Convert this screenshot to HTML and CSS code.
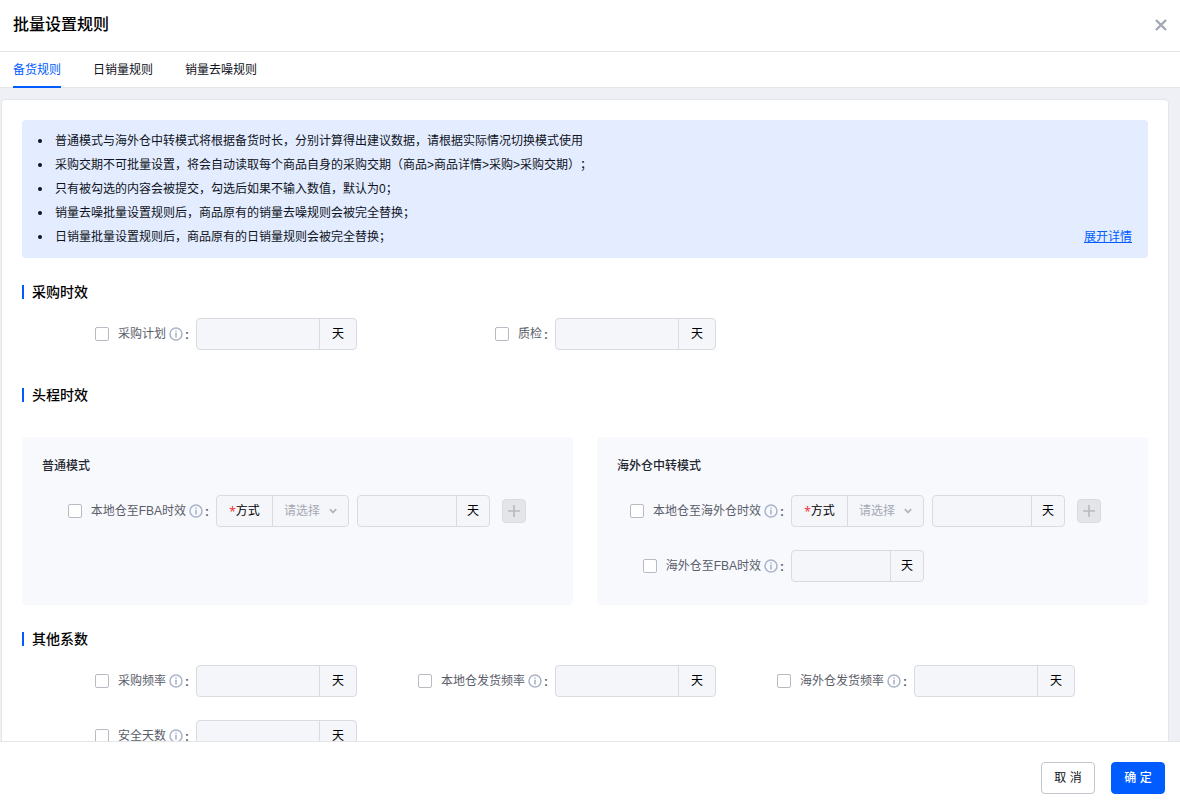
FILE: index.html
```html
<!DOCTYPE html>
<html lang="zh-CN">
<head>
<meta charset="utf-8">
<title>批量设置规则</title>
<link rel="stylesheet" href="styles.css">
</head>
<body>
<svg class="sprite" aria-hidden="true">
  <symbol id="info" viewBox="0 0 14 14">
    <circle cx="7" cy="7" r="6" fill="none" stroke="currentColor" stroke-width="1.5"/>
    <path d="M6.2 3.4h1.6v1.4H6.2zM6.2 5.8h1.6v4.8H6.2z" fill="currentColor"/>
  </symbol>
  <symbol id="plus" viewBox="0 0 12 12">
    <path d="M6 0v12M0 6h12" fill="none" stroke="currentColor" stroke-width="1.6"/>
  </symbol>
  <symbol id="chevron" viewBox="0 0 8 6">
    <path d="M.8 1.2 4 4.4l3.2-3.2" fill="none" stroke="currentColor" stroke-width="1.8"/>
  </symbol>
</svg>
<div class="dialog">
  <header class="dialog-header">
    <h1 class="dialog-title">批量设置规则</h1>
    <button class="close" type="button" aria-label="关闭">
      <svg width="12" height="12" viewBox="0 0 12 12"><path d="M1 1l10 10M11 1L1 11" fill="none" stroke="currentColor" stroke-width="2.4"/></svg>
    </button>
  </header>
  <nav class="tabs">
    <button class="tab active" type="button">备货规则</button>
    <button class="tab" type="button">日销量规则</button>
    <button class="tab" type="button">销量去噪规则</button>
  </nav>
  <main class="content">
    <div class="card">
      <div class="notice">
        <ul class="notice-list">
          <li>普通模式与海外仓中转模式将根据备货时长，分别计算得出建议数据，请根据实际情况切换模式使用</li>
          <li>采购交期不可批量设置，将会自动读取每个商品自身的采购交期（商品&gt;商品详情&gt;采购&gt;采购交期）；</li>
          <li>只有被勾选的内容会被提交，勾选后如果不输入数值，默认为0；</li>
          <li>销量去噪批量设置规则后，商品原有的销量去噪规则会被完全替换；</li>
          <li>日销量批量设置规则后，商品原有的日销量规则会被完全替换；</li>
        </ul>
        <a class="link" href="#">展开详情</a>
      </div>

      <section class="section">
        <h2 class="section-title">采购时效</h2>
        <div class="grid">
          <div class="field">
            <label class="label"><input class="check" type="checkbox"><span>采购计划</span><svg class="info"><use href="#info"/></svg><span class="colon">:</span></label>
            <div class="group wide"><input class="input" type="text" aria-label="采购计划" disabled><span class="unit">天</span></div>
          </div>
          <div class="field">
            <label class="label"><input class="check" type="checkbox"><span>质检</span><span class="colon">:</span></label>
            <div class="group wide"><input class="input" type="text" aria-label="质检" disabled><span class="unit">天</span></div>
          </div>
        </div>
      </section>

      <section class="section spaced">
        <h2 class="section-title">头程时效</h2>
        <div class="panels">
          <div class="panel">
            <h3 class="panel-title">普通模式</h3>
            <div class="field">
              <label class="label"><input class="check" type="checkbox"><span>本地仓至FBA时效</span><svg class="info"><use href="#info"/></svg><span class="colon">:</span></label>
              <div class="group"><span class="prefix"><i class="star">*</i>方式</span><span class="select-box"><select class="select" aria-label="方式" disabled><option>请选择</option></select><svg class="chevron"><use href="#chevron"/></svg></span></div>
              <div class="group"><input class="input" type="text" aria-label="本地仓至FBA时效" disabled><span class="unit">天</span></div>
              <button class="add" type="button" aria-label="添加" disabled><svg width="12" height="12"><use href="#plus"/></svg></button>
            </div>
          </div>
          <div class="panel">
            <h3 class="panel-title">海外仓中转模式</h3>
            <div class="field">
              <label class="label"><input class="check" type="checkbox"><span>本地仓至海外仓时效</span><svg class="info"><use href="#info"/></svg><span class="colon">:</span></label>
              <div class="group"><span class="prefix"><i class="star">*</i>方式</span><span class="select-box"><select class="select" aria-label="方式" disabled><option>请选择</option></select><svg class="chevron"><use href="#chevron"/></svg></span></div>
              <div class="group"><input class="input" type="text" aria-label="本地仓至海外仓时效" disabled><span class="unit">天</span></div>
              <button class="add" type="button" aria-label="添加" disabled><svg width="12" height="12"><use href="#plus"/></svg></button>
            </div>
            <div class="field">
              <label class="label"><input class="check" type="checkbox"><span>海外仓至FBA时效</span><svg class="info"><use href="#info"/></svg><span class="colon">:</span></label>
              <div class="group"><input class="input" type="text" aria-label="海外仓至FBA时效" disabled><span class="unit">天</span></div>
            </div>
          </div>
        </div>
      </section>

      <section class="section">
        <h2 class="section-title">其他系数</h2>
        <div class="grid">
          <div class="field">
            <label class="label"><input class="check" type="checkbox"><span>采购频率</span><svg class="info"><use href="#info"/></svg><span class="colon">:</span></label>
            <div class="group wide"><input class="input" type="text" aria-label="采购频率" disabled><span class="unit">天</span></div>
          </div>
          <div class="field">
            <label class="label"><input class="check" type="checkbox"><span>本地仓发货频率</span><svg class="info"><use href="#info"/></svg><span class="colon">:</span></label>
            <div class="group wide"><input class="input" type="text" aria-label="本地仓发货频率" disabled><span class="unit">天</span></div>
          </div>
          <div class="field">
            <label class="label"><input class="check" type="checkbox"><span>海外仓发货频率</span><svg class="info"><use href="#info"/></svg><span class="colon">:</span></label>
            <div class="group wide"><input class="input" type="text" aria-label="海外仓发货频率" disabled><span class="unit">天</span></div>
          </div>
          <div class="field">
            <label class="label"><input class="check" type="checkbox"><span>安全天数</span><svg class="info"><use href="#info"/></svg><span class="colon">:</span></label>
            <div class="group wide"><input class="input" type="text" aria-label="安全天数" disabled><span class="unit">天</span></div>
          </div>
        </div>
      </section>
    </div>
  </main>
  <footer class="dialog-footer">
    <button class="btn" type="button">取 消</button>
    <button class="btn primary" type="button">确 定</button>
  </footer>
</div>
</body>
</html>
```
FILE: styles.css
```css
* { box-sizing: border-box; }

body {
  margin: 0;
  color: #0f1222;
  font: 12px/20px "Liberation Sans", "Noto Sans CJK SC", sans-serif;
  text-spacing-trim: space-all;
}

button, input, select { font: inherit; color: inherit; }
h1, h2, h3, ul { margin: 0; padding: 0; }
.sprite { display: none; }

.dialog {
  display: flex;
  flex-direction: column;
  height: 100vh;
  background: #fff;
}

.dialog-header {
  display: flex;
  align-items: center;
  justify-content: space-between;
  padding: 13px 13px 14px;
  border-bottom: 1px solid #e4e5e9;
}
.dialog-title { font-size: 16px; line-height: 24px; font-weight: 500; color: #000; }
.close {
  display: flex;
  padding: 0;
  border: 0;
  background: none;
  color: #a3a8b5;
}

.tabs {
  display: flex;
  gap: 32px;
  padding: 0 13px;
  border-bottom: 1px solid #e4e5e9;
}
.tab {
  height: 36px;
  margin-bottom: -1px;
  padding: 2px 0 0;
  border: 0;
  border-bottom: 2px solid transparent;
  background: none;
}
.tab.active { color: #005cff; border-color: #005cff; }

.content {
  flex: 1;
  min-height: 0;
  overflow-y: auto;
  scrollbar-width: none;
  padding: 11px 11px 11px 1px;
  background: #eff0f5;
}
.card {
  padding: 20px;
  border: 1px solid #e4e5ea;
  border-radius: 4px;
  background: #fff;
}

.notice {
  display: flex;
  align-items: flex-end;
  justify-content: space-between;
  padding: 9px 16px;
  border-radius: 4px;
  background: #e3edff;
  line-height: 24px;
}
.notice-list { list-style: none; }
.notice-list li { display: flex; align-items: center; gap: 13px; }
.notice-list li::before {
  content: "";
  width: 4px;
  height: 4px;
  border-radius: 50%;
  background: #0f1222;
}
.link { color: #005cff; white-space: nowrap; }

.section { margin-top: 24px; }
.section.spaced { margin-top: 35px; }
.section-title {
  display: flex;
  align-items: center;
  gap: 8px;
  font-size: 14px;
  font-weight: 500;
  color: #000;
}
.section-title::before {
  content: "";
  width: 2px;
  height: 14px;
  background: #005cff;
}

.grid {
  display: grid;
  grid-template-columns: repeat(3, 1fr);
  row-gap: 23px;
  margin-top: 16px;
  padding-right: 49px;
}
.field { display: flex; align-items: center; }
.label {
  display: flex;
  align-items: center;
  justify-content: flex-end;
  width: 174px;
  padding-right: 7px;
  color: #5a5d69;
  white-space: nowrap;
}
.check {
  appearance: none;
  width: 14px;
  height: 14px;
  margin: 0 9px 0 0;
  border: 1px solid #b9bbc4;
  border-radius: 2px;
  background: #fff;
}
.info { width: 14px; height: 14px; margin-left: 3px; color: #aab4c8; }
.colon { padding: 2px 0 0 2px; font-weight: 700; }

.group {
  display: flex;
  width: 133px;
  height: 32px;
  border: 1px solid #d9dbe1;
  border-radius: 4px;
  background: #f4f6fa;
}
.group + .group { margin-left: 8px; }
.input {
  flex: 1;
  min-width: 0;
  padding: 0 8px;
  border: 0;
  background: none;
}
.unit {
  width: 33px;
  border-left: 1px solid #d9dbe1;
  line-height: 30px;
  text-align: center;
  color: #000;
}
.wide { width: 161px; }
.wide .unit { width: 37px; }
.prefix {
  display: flex;
  align-items: center;
  justify-content: center;
  width: 56px;
  border-right: 1px solid #d9dbe1;
  color: #000;
}
.star { padding-top: 2px; color: #f0323c; font-family: "Noto Sans", sans-serif; font-style: normal; }
.select-box {
  display: flex;
  flex: 1;
  align-items: center;
  padding: 0 11px;
}
.select {
  appearance: none;
  flex: 1;
  min-width: 0;
  height: 30px;
  padding: 0;
  border: 0;
  background: none;
  color: #a5a9b4;
  opacity: 1;
}
.chevron { width: 8px; height: 6px; color: #b4b7c0; }
.add {
  display: flex;
  align-items: center;
  justify-content: center;
  width: 24px;
  height: 24px;
  margin-left: 12px;
  padding: 0;
  border: 1px solid #d9dbe1;
  border-radius: 4px;
  background: #e4e5e9;
  color: #b6b9c1;
}

.panels {
  display: grid;
  grid-template-columns: 1fr 1fr;
  gap: 24px;
  margin-top: 32px;
}
.panel {
  display: flex;
  flex-direction: column;
  gap: 23px;
  padding: 19px 20px 23px;
  border-radius: 4px;
  background: #f8f9fd;
}
.panel-title { margin-bottom: -4px; font-size: 12px; font-weight: 500; color: #23252f; }

.dialog-footer {
  display: flex;
  justify-content: flex-end;
  gap: 16px;
  padding: 20px 15px 13px;
  border-top: 1px solid #e4e5e9;
}
.btn {
  width: 54px;
  height: 32px;
  padding: 0;
  border: 1px solid #c3c5cd;
  border-radius: 4px;
  background: #fff;
}
.btn.primary { border-color: #005cff; background: #005cff; color: #fff; font-weight: 500; }
```
